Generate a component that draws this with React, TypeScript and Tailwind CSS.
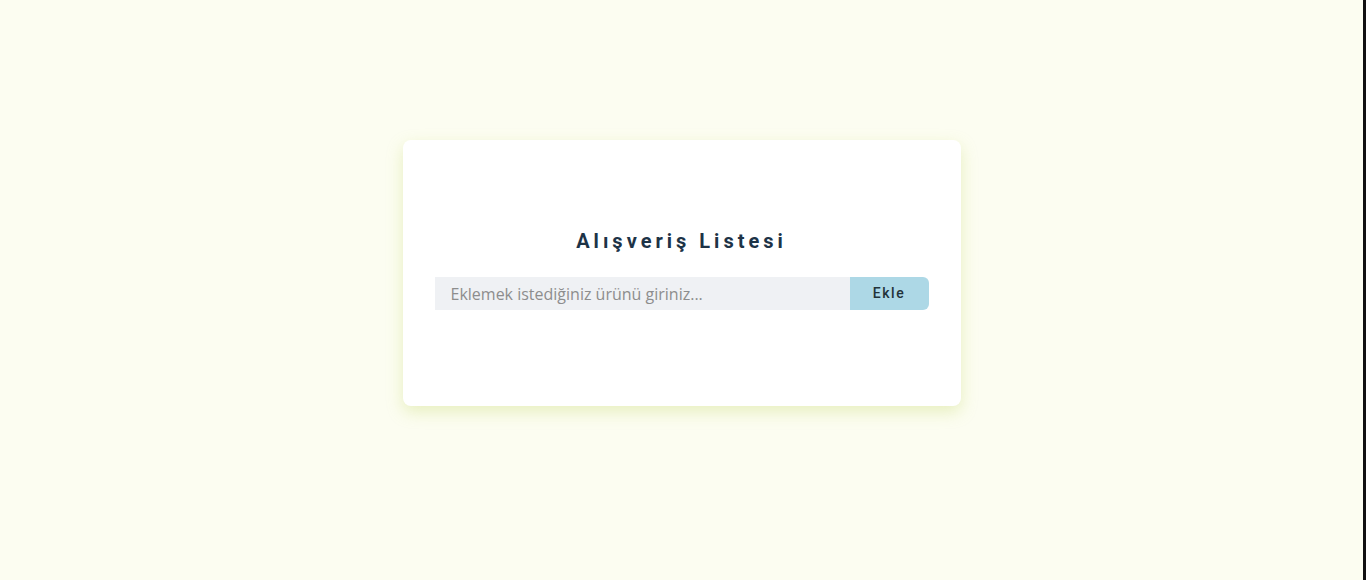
export default function App() {
    return (
        <div className="min-h-screen w-full bg-[#fcfdf1] border-r-[3px] border-[#111] pt-[140px] flex justify-center">
            {/* Card */}
            <div className="w-[558px] h-[266px] bg-white rounded-lg shadow-[0_6px_16px_rgba(196,214,100,0.35)] px-8 pt-[91px]">
                <h1
                    className="text-center text-[20px] leading-[20px] font-bold tracking-[4px] text-[#1d3347]"
                    style={{ fontFamily: "Roboto, sans-serif" }}
                >
                    Alışveriş Listesi
                </h1>

                {/* Input row */}
                <div className="mt-[26px] flex h-[33px]">
                    <input
                        type="text"
                        placeholder="Eklemek istediğiniz ürünü giriniz..."
                        className="flex-1 min-w-0 bg-[#eff1f4] pl-4 text-[16px] text-[#555] placeholder:text-[#8d8d8d] outline-none"
                        style={{ fontFamily: "'Open Sans', sans-serif" }}
                    />
                    <button
                        className="w-[79px] bg-[#add8e6] rounded-r-md text-[14px] font-medium tracking-[1.5px] text-[#23333a]"
                        style={{ fontFamily: "Roboto, sans-serif" }}
                    >
                        Ekle
                    </button>
                </div>
            </div>
        </div>
    );
}
